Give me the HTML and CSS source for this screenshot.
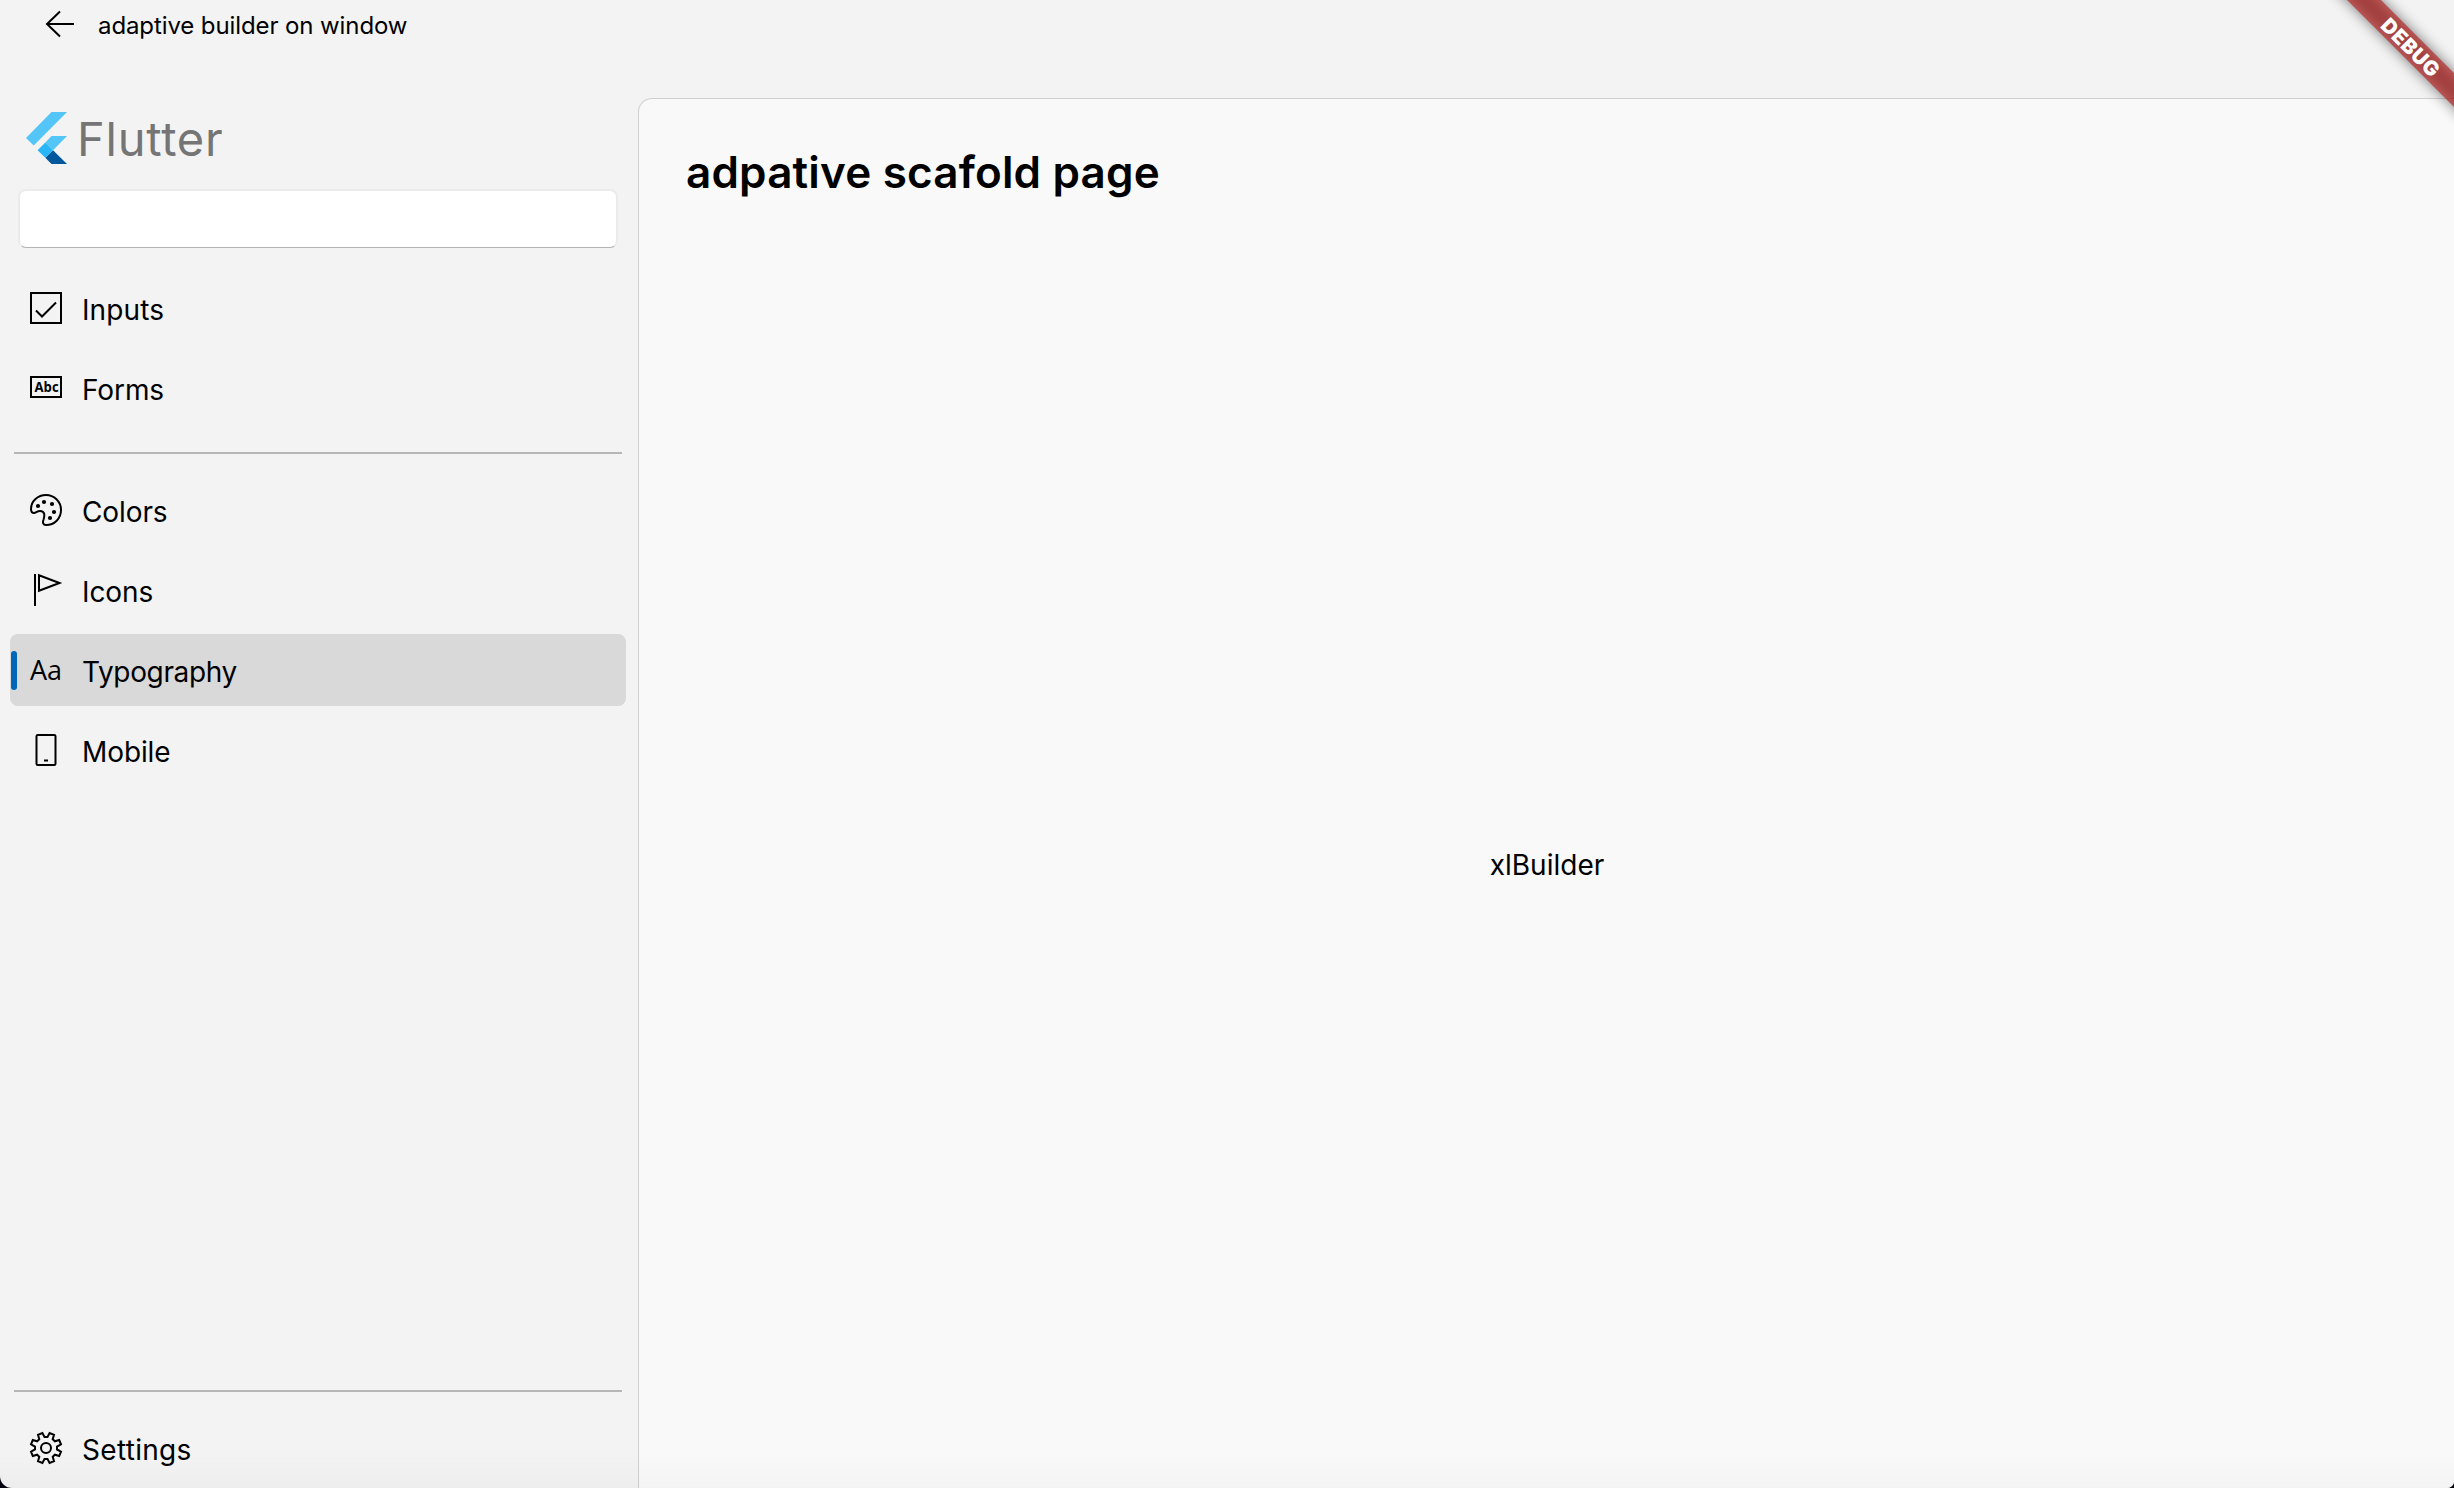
FILE: index.html
```html
<!DOCTYPE html>
<html lang="en">
<head>
<meta charset="utf-8">
<title>adaptive builder on window</title>
<link rel="stylesheet" href="styles.css">
</head>
<body>
<div class="window">
  <header class="titlebar">
    <svg class="back" viewBox="0 0 30 28" width="30" height="28"><path d="M15 1.500 2 14l13 12.500M2 14h27"/></svg>
    <span class="window-title">adaptive builder on window</span>
  </header>
  <div class="body">
    <nav class="pane">
      <div class="brand">
        <svg viewBox="0 0 41 52" width="41" height="52">
          <path fill="#54c5f8" d="M25.500 0H41L7.700 33.500 0 25.900zM25.500 24H41L27 38.200l-7.700-7.700z"/>
          <path fill="#01579b" d="M19.300 45.800 25.500 52H41L27 38.200z"/>
          <path fill="#29b6f6" d="m11.600 38.200 7.700-7.700 7.700 7.700-7.700 7.600z"/>
        </svg>
        <span class="brand-name">Flutter</span>
      </div>
      <input class="search" type="text" aria-label="Search">
      <ul class="nav">
        <li class="item">
          <svg viewBox="0 0 32 32"><path d="M1 1h30v30H1zM6 18.500l6 6L26 10.500"/></svg>
          <span class="loose">Inputs</span>
        </li>
        <li class="item">
          <svg viewBox="0 0 32 32"><path d="M1 5h30v20H1z"/><text class="abc" x="4.600" y="20" textLength="24" lengthAdjust="spacingAndGlyphs">Abc</text></svg>
          <span>Forms</span>
        </li>
      </ul>
      <hr class="rule">
      <ul class="nav">
        <li class="item">
          <svg viewBox="0 0 32 32"><path d="M1 15C1 7 8 1 16 1s15 6.500 15 15-6.500 15-15 15c-3 0-3.500-2.500-2.600-5 1.500-4.500 1.600-9-3.400-9-3 0-4 2-6 2S1 17 1 15z"/><g class="dots"><circle cx="8" cy="12" r="2.100"/><circle cx="14" cy="8" r="2.100"/><circle cx="22" cy="10" r="2.100"/><circle cx="24" cy="18" r="2.100"/><circle cx="20" cy="24" r="2.100"/></g></svg>
          <span>Colors</span>
        </li>
        <li class="item">
          <svg viewBox="0 0 32 32"><path d="M5 0v32M9 1.300v15.400L29.500 9z"/></svg>
          <span>Icons</span>
        </li>
        <li class="item selected">
          <svg viewBox="0 0 32 32"><text class="aa" x="0" y="26" textLength="32">Aa</text></svg>
          <span>Typography</span>
        </li>
        <li class="item">
          <svg viewBox="0 0 32 32"><rect x="6.500" y="1" width="19" height="30" rx="1.200"/><path d="M14 26.500h4"/></svg>
          <span>Mobile</span>
        </li>
      </ul>
      <div class="spacer"></div>
      <hr class="rule">
      <ul class="nav footer">
        <li class="item">
          <svg viewBox="-16 -16 32 32"><circle r="5"/><path d="M11 1.500 15 3.600 13.200 8 8.900 6.700 6.700 8.900 8 13.200 3.600 15 1.500 11H-1.500L-3.600 15-8 13.200-6.700 8.900-8.900 6.700-13.200 8-15 3.600-11 1.500V-1.500L-15-3.600-13.200-8-8.900-6.700-6.700-8.900-8-13.200-3.600-15-1.500-11H1.500L3.600-15 8-13.200 6.700-8.900 8.900-6.700 13.200-8 15-3.600 11-1.500z"/></svg>
          <span class="wide">Settings</span>
        </li>
      </ul>
    </nav>
    <main class="page">
      <h1>adpative scafold page</h1>
      <div class="content"><span>xlBuilder</span></div>
    </main>
  </div>
  <div class="banner"><span>DEBUG</span></div>
</div>
</body>
</html>
```
FILE: styles.css
```css
* { box-sizing: border-box; }
body {
  margin: 0;
  background: #05020f;
  font-family: Inter, "Liberation Sans", sans-serif;
  color: #000;
}
.window {
  position: relative;
  width: 100vw;
  height: 100vh;
  overflow: hidden;
  display: flex;
  flex-direction: column;
  background: #f3f3f3;
  border-bottom-left-radius: 12px;
  border-bottom-right-radius: 7px;
}
/* soft shade along the bottom edge of the window */
.window::after {
  content: "";
  position: absolute;
  inset: auto 0 0 0;
  height: 36px;
  background: linear-gradient(transparent, rgba(0, 0, 0, .025));
  pointer-events: none;
}
.titlebar {
  height: 98px;
  padding: 10px 0 0 45px;
  display: flex;
  align-items: flex-start;
  gap: 23px;
}
.back { fill: none; stroke: #000; stroke-width: 2; }
.window-title {
  padding-top: 1px;
  font-size: 24px;
  line-height: 30px;
  letter-spacing: -.1px;
}
.body { flex: 1; min-height: 0; display: flex; }
.pane {
  width: 638px;
  display: flex;
  flex-direction: column;
}
.brand {
  height: 91px;
  padding: 14px 0 0 26px;
  display: flex;
  gap: 10px;
}
.brand-name {
  padding-top: 1px;
  font-size: 47px;
  line-height: 52px;
  font-weight: 370;
  letter-spacing: .75px;
  color: #757575;
}
.search {
  width: 600px;
  height: 59px;
  margin: 0 0 24px 18px;
  border: 2px solid #ebebeb;
  border-bottom: 1px solid #b4b4b4;
  border-radius: 8px;
  background: #fff;
  outline: none;
}
.nav {
  list-style: none;
  margin: 0;
  padding: 0 12px 0 10px;
  display: flex;
  flex-direction: column;
  gap: 8px;
}
.item {
  height: 72px;
  padding-left: 20px;
  display: flex;
  align-items: center;
  gap: 20px;
  border-radius: 8px;
  font-size: 28px;
  letter-spacing: -.1px;
}
.item span { line-height: 34px; padding-top: 4px; }
.item .loose { letter-spacing: .1px; }
.item .wide { letter-spacing: .3px; }
.item svg {
  width: 32px;
  height: 32px;
  overflow: visible;
  fill: none;
  stroke: #000;
  stroke-width: 2;
  letter-spacing: 0;
}
.item .dots { fill: #000; stroke: none; }
.item text { fill: #000; stroke: none; }
.item .abc { font: 700 14px "Open Sans", sans-serif; }
.item .aa { font: 400 27px "Open Sans", sans-serif; }
.selected { background: #d9d9d9; padding-left: 0; letter-spacing: -.35px; }
.selected::before {
  content: "";
  width: 6px;
  height: 39px;
  margin: 0 -7px 0 1px;
  border-radius: 3px;
  background: #0067b8;
}
.rule {
  width: 608px;
  height: 2px;
  margin: 28px 0 20px 14px;
  border: 0;
  background: #b6b6b6;
}
.spacer { flex: 1; }
.footer { margin-bottom: 4px; }
.page {
  flex: 1;
  display: flex;
  flex-direction: column;
  border: 1px solid #d0d0d0;
  border-width: 1px 0 0 1px;
  border-top-left-radius: 14px;
  background: #f9f9f9;
}
h1 {
  margin: 45px 0 0 47px;
  font-size: 44px;
  line-height: 56px;
  font-weight: 600;
  letter-spacing: .18px;
}
.content {
  flex: 1;
  display: flex;
  align-items: center;
  justify-content: center;
  padding: 42px 0 0 1px;
  font-size: 28px;
}
.banner {
  position: absolute;
  left: 2289px;
  top: 33px;
  width: 240px;
  height: 24px;
  transform: rotate(45deg);
  display: flex;
  align-items: center;
  justify-content: center;
  color: #fff;
  font-size: 20.4px;
  font-weight: 900;
}
.banner::before {
  content: "";
  position: absolute;
  inset: 0;
  background: rgba(0, 0, 0, .5);
  filter: blur(7px);
}
.banner::after {
  content: "";
  position: absolute;
  inset: 0;
  background: rgba(183, 28, 28, .63);
}
.banner span { position: relative; z-index: 1; left: 3px; letter-spacing: .5px; }
```
